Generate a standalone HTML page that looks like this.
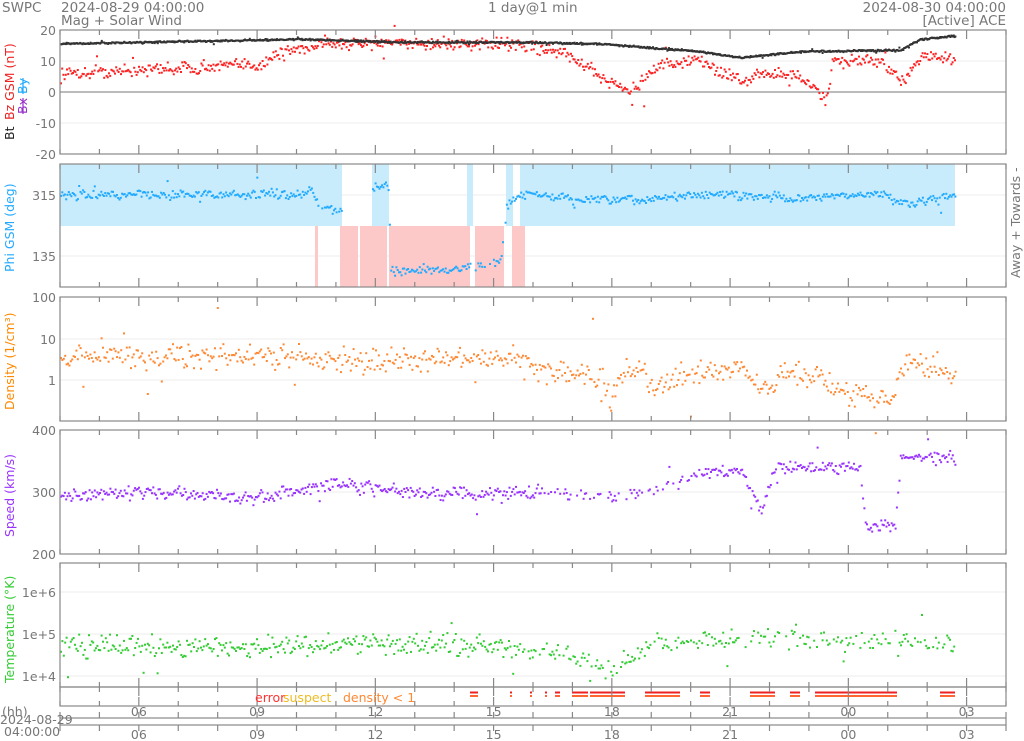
<!DOCTYPE html>
<html><head><meta charset="utf-8">
<style>
html,body{margin:0;padding:0;background:#fff;width:1024px;height:741px;overflow:hidden}
svg{display:block;font-family:"DejaVu Sans","Liberation Sans",sans-serif}
.t{fill:#777;font-size:13.5px}
.a{fill:#777;font-size:12.5px}
</style></head><body>
<svg id="s" width="1024" height="741" viewBox="0 0 1024 741" xmlns="http://www.w3.org/2000/svg">
<text class="t" x="2" y="12">SWPC</text>
<text class="t" x="61" y="12">2024-08-29 04:00:00</text>
<text class="t" x="61" y="25">Mag + Solar Wind</text>
<text class="t" x="488" y="12">1 day@1 min</text>
<text class="t" x="1006" y="12" text-anchor="end">2024-08-30 04:00:00</text>
<text class="t" x="1006" y="25" text-anchor="end">[Active] ACE</text>
<g id="bg"></g>
<g id="dots"></g>
<g id="frames" fill="none" stroke="#888" stroke-width="1.2"></g>
<g class="a" text-anchor="end">
<text x="56" y="35">20</text><text x="56" y="66">10</text><text x="56" y="97">0</text><text x="56" y="128">-10</text><text x="56" y="159">-20</text>
<text x="56" y="200">315</text><text x="56" y="261">135</text>
<text x="56" y="302">100</text><text x="56" y="344">10</text><text x="56" y="385">1</text>
<text x="56" y="435">400</text><text x="56" y="497">300</text><text x="56" y="559">200</text>
<text x="56" y="597">1e+6</text><text x="56" y="639">1e+5</text><text x="56" y="681">1e+4</text>
</g>
<g font-size="12.5">
<text transform="translate(14,140) rotate(-90)" fill="#222">Bt</text>
<text transform="translate(14,120) rotate(-90)" fill="#e22">Bz GSM (nT)</text>
<text transform="translate(27,114) rotate(-90)" fill="#93c" text-decoration="line-through">Bx</text>
<text transform="translate(27,94) rotate(-90)" fill="#2af" text-decoration="line-through">By</text>
<text transform="translate(14,272) rotate(-90)" fill="#2af">Phi GSM (deg)</text>
<text transform="translate(14,410) rotate(-90)" fill="#f80">Density (1/cm³)</text>
<text transform="translate(14,537) rotate(-90)" fill="#93f">Speed (km/s)</text>
<text transform="translate(14,683) rotate(-90)" fill="#3c3">Temperature (°K)</text>
<text transform="translate(1020,278) rotate(-90)" fill="#777">Away +  Towards -</text>
</g>
<g font-size="12.5">
<text x="255" y="702" fill="#f33">error</text><text x="283" y="702" fill="#eb2">suspect</text>
<text x="343" y="702" fill="#f83">density &lt; 1</text>
</g>
<g class="a" text-anchor="middle" id="tl"></g>
<text class="a" x="2" y="716">(hh)</text>
<text class="a" x="0" y="724" font-size="11">2024-08-29</text>
<text class="a" x="4" y="736" font-size="11">04:00:00</text>
</svg>
<script>
var NS="http://www.w3.org/2000/svg";
function el(p,n,a){var e=document.createElementNS(NS,n);for(var k in a)e.setAttribute(k,a[k]);p.appendChild(e);return e;}
var seed=12345;function r(){seed=(seed*16807)%2147483647;return seed/2147483647;}
function g(){return (r()+r()+r()-1.5)*1.4;}
var X0=60,X1=1006,PH=(X1-X0)/24;
var bg=document.getElementById('bg'),dots=document.getElementById('dots'),fr=document.getElementById('frames'),tl=document.getElementById('tl');
var panels=[[30,154],[164,287],[297,421],[430,554],[563,687],[687,706]];
var grids=[[30,61,92,123,154],[195,256],[297,339,380],[430,492,554],[592,634,676],[]];
panels.forEach(function(p,i){
  grids[i].forEach(function(y){el(bg,'line',{x1:X0,x2:X1,y1:y,y2:y,stroke:(i==0&&y==92)?'#777':'#eee','stroke-width':1});});
  el(fr,'rect',{x:X0,y:p[0],width:X1-X0,height:p[1]-p[0]});
  for(var h=0;h<=24;h++){var x=X0+h*PH,L=(h%3==2)?9:5;
    el(fr,'line',{x1:x,x2:x,y1:p[0],y2:p[0]+L});el(fr,'line',{x1:x,x2:x,y1:p[1],y2:p[1]-L});}
});
el(fr,'rect',{x:X0,y:718,width:X1-X0,height:7,fill:'#fff'});
el(bg,'line',{x1:X0,x2:955,y1:721.5,y2:721.5,stroke:'#c43','stroke-width':2});
for(var h=0;h<=24;h++){var x=X0+h*PH;el(fr,'line',{x1:x,x2:x,y1:712,y2:718});el(fr,'line',{x1:x,x2:x,y1:725,y2:731});
 if(h%3==2){var lab=('0'+((h+4)%24)).slice(-2);el(tl,'text',{x:x,y:716}).textContent=lab;el(tl,'text',{x:x,y:739}).textContent=lab;}}
[[60,342],[372,389],[467,473],[506,513],[520,955]].forEach(function(b){el(bg,'rect',{x:b[0],y:164,width:b[1]-b[0],height:62,fill:'#c8ecfc'});});
[[315,318],[340,358],[360,387],[389,470],[475,504],[512,525]].forEach(function(b){el(bg,'rect',{x:b[0],y:226,width:b[1]-b[0],height:61,fill:'#fcc8c8'});});
function interp(k,x){for(var i=0;i<k.length-1;i++){if(x<=k[i+1][0]){var t=(x-k[i][0])/(k[i+1][0]-k[i][0]);return k[i][1]+t*(k[i+1][1]-k[i][1]);}}return k[k.length-1][1];}
function series(k,col,noise,step,ymap,skip,sz){sz=sz||2;
 for(var x=60;x<=955;x+=step){if(skip&&skip(x))continue;var v=interp(k,x)+g()*noise;if(r()<0.04)v+=g()*noise*3;var y=ymap(v,x);
  el(dots,'rect',{x:x.toFixed(1),y:(y-sz/2).toFixed(1),width:sz,height:sz,fill:col});}}
series([[60,6],[200,8],[262,9],[275,12],[320,15.5],[520,15.5],[560,13],[600,5],[630,0],[660,9],[700,10],[740,3],[760,6],[800,5],[825,-3],[832,10],[880,10],[900,3],[920,12],[955,10]],'#f22',1.4,1.2,function(v){return 92-v*3.1;});
series([[60,15.5],[300,17],[400,16],[520,16],[600,15.5],[700,13],[740,11],[800,13],[900,13.5],[920,17],[955,18]],'#333',0.2,0.8,function(v){return 92-v*3.1;});
series([[60,315],[300,318],[310,330],[320,280],[340,270],[360,340],[388,340],[390,90],[460,95],[500,120],[506,280],[520,320],[580,300],[640,300],[700,318],[800,305],[880,320],[900,290],[955,310]],'#2af',9,1.3,function(v){return 195-(v-315)*61/180;},function(x){return (x>342&&x<372)||(x>318&&x<340&&r()<0.5)||(x>470&&x<506&&r()<0.3);});
series([[60,0.6],[300,0.55],[460,0.45],[520,0.55],[540,0.2],[600,0.1],[610,-0.5],[625,0.3],[640,0.3],[650,-0.3],[680,0.1],[720,0.15],[740,0.3],[765,-0.3],[780,0.15],[820,0.1],[840,-0.3],[890,-0.5],[905,0.5],[930,0.3],[955,0]],'#f83',0.2,1.4,function(v){return 380-v*41.5;});
series([[60,295],[150,300],[250,290],[330,312],[400,300],[480,295],[560,300],[620,290],[660,310],[700,330],[740,335],[760,270],[775,340],[860,340],[865,245],[895,245],[900,355],[955,355]],'#93f',7,1.3,function(v){return 430+(400-v)*0.62;},function(x){return x>540&&x<700&&r()<0.5;});
series([[60,4.7],[300,4.7],[380,4.8],[500,4.7],[560,4.5],[610,4.15],[650,4.7],[720,4.9],[800,4.95],[850,4.8],[955,4.75]],'#3c3',0.17,1.4,function(v){return 634-(v-5)*42;},function(x){return x>520&&r()<0.35;});
[[470,478],[510,512],[530,532],[545,547],[555,560],[572,588],[590,625],[645,680],[700,710],[750,775],[790,800],[815,897],[940,955]].forEach(function(b){
 el(dots,'rect',{x:b[0],y:691.5,width:b[1]-b[0],height:2,fill:'#e22'});el(dots,'rect',{x:b[0],y:695,width:b[1]-b[0],height:2,fill:'#f63'});});
</script>
</body></html>
